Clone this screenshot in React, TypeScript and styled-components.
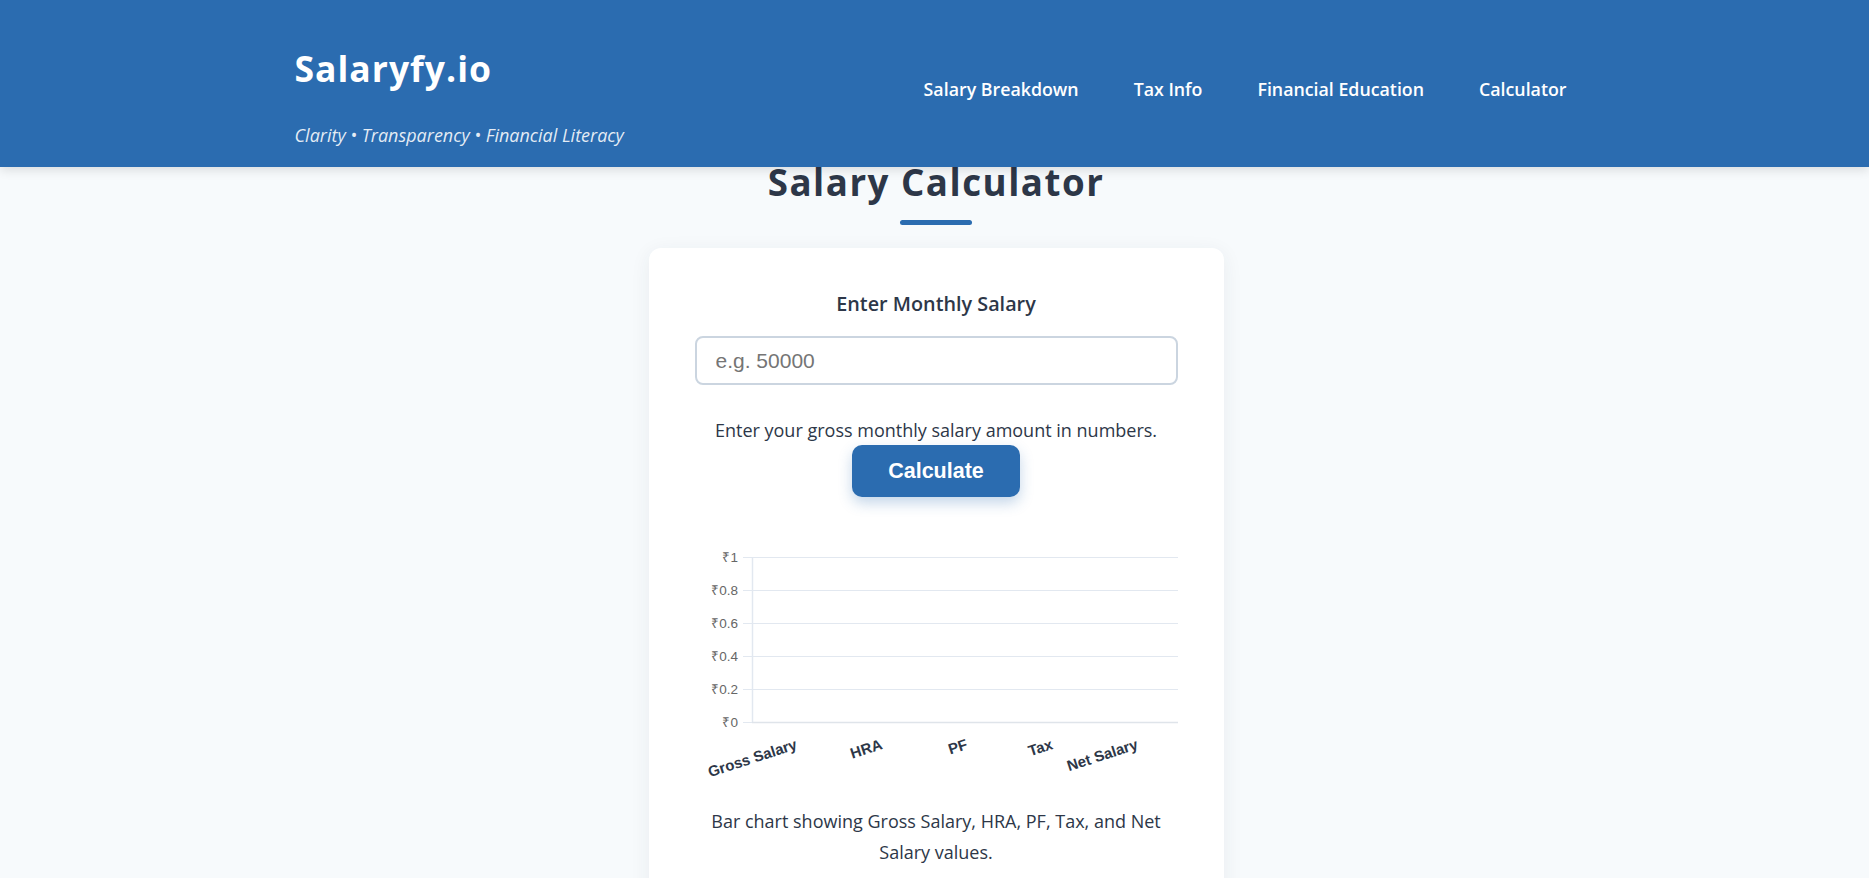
import React from "react";
import styled, { createGlobalStyle } from "styled-components";

const GlobalStyle = createGlobalStyle`
  * { box-sizing: border-box; }
  html, body { margin: 0; padding: 0; }
  body {
    background: #f7fafc;
    font-family: "Open Sans", "Noto Sans", sans-serif;
    color: #2d3748;
    overflow: hidden;
  }
`;

const Header = styled.header`
  position: sticky;
  top: 0;
  z-index: 10;
  height: 167px;
  background: #2b6cb0;
  box-shadow: 0 3px 10px rgba(0, 0, 0, 0.12);
`;

const HeaderInner = styled.div`
  max-width: 1280px;
  margin: 0 auto;
  padding-top: 47px;
  display: flex;
  justify-content: space-between;
  align-items: flex-start;
`;

const Brand = styled.div`
  display: flex;
  flex-direction: column;
  gap: 33px;
`;

const Logo = styled.h1`
  margin: 0;
  font-size: 35.5px;
  line-height: 43px;
  font-weight: 700;
  letter-spacing: 1px;
  color: #ffffff;
`;

const Tagline = styled.p`
  margin: 0;
  font-size: 18px;
  line-height: 24px;
  font-style: italic;
  color: rgba(255, 255, 255, 0.88);
`;

const Nav = styled.nav`
  display: flex;
  gap: 39px;
  margin-top: 22px;
`;

const NavLink = styled.a`
  padding: 8px;
  font-size: 17.8px;
  line-height: 24px;
  font-weight: 600;
  color: #ffffff;
  text-decoration: none;
  cursor: pointer;
`;

const Main = styled.main`
  margin-top: -7px;
  padding-left: 3px;
  display: flex;
  flex-direction: column;
  align-items: center;
`;

const PageTitle = styled.h2`
  margin: 0;
  font-size: 36.7px;
  line-height: 44px;
  font-weight: 700;
  letter-spacing: 1.5px;
  color: #2d3748;
`;

const TitleBar = styled.div`
  width: 72px;
  height: 5px;
  border-radius: 3px;
  background: #2b6cb0;
  margin-top: 16px;
`;

const Card = styled.section`
  width: 575px;
  margin-top: 23px;
  background: #ffffff;
  border-radius: 12px;
  box-shadow: 0 4px 20px rgba(45, 55, 72, 0.07);
  padding: 42px 46px 60px;
  display: flex;
  flex-direction: column;
  align-items: center;
`;

const Label = styled.label`
  font-size: 19.8px;
  line-height: 28px;
  font-weight: 600;
  color: #2d3748;
`;

const Input = styled.input`
  width: 100%;
  height: 49px;
  margin-top: 18px;
  padding: 0 19px;
  border: 2px solid #cbd5e0;
  border-radius: 8px;
  font-family: "Liberation Sans", Arial, sans-serif;
  font-size: 21px;
  color: #2d3748;
  background: #ffffff;
  outline: none;
  &::placeholder { color: #757575; }
`;

const Help = styled.p`
  margin: 33px 0 0;
  font-size: 18px;
  line-height: 24px;
  color: #2d3748;
  text-align: center;
`;

const Button = styled.button`
  margin-top: 3px;
  width: 168px;
  height: 52px;
  border: none;
  border-radius: 10px;
  background: #2b6cb0;
  color: #ffffff;
  font-family: "Liberation Sans", Arial, sans-serif;
  font-size: 21.5px;
  font-weight: 700;
  box-shadow: 0 6px 14px rgba(43, 108, 176, 0.28);
  cursor: pointer;
`;

const ChartWrap = styled.div`
  width: 100%;
  margin-top: 48px;
`;

const Caption = styled.p`
  margin: 21px 0 0;
  font-size: 18px;
  line-height: 31px;
  color: #2d3748;
  text-align: center;
`;

const yTicks = [
  { y: 12, label: "₹1" },
  { y: 45, label: "₹0.8" },
  { y: 78, label: "₹0.6" },
  { y: 111, label: "₹0.4" },
  { y: 144, label: "₹0.2" },
  { y: 177, label: "₹0" },
];

const categories = ["Gross Salary", "HRA", "PF", "Tax", "Net Salary"];

function Chart() {
  const left = 57;
  const right = 483;
  const step = (right - left) / categories.length;
  return (
    <svg width="483" height="240" viewBox="0 0 483 240" style={{ display: "block" }}>
      {yTicks.map((t) => (
        <g key={t.label}>
          <line x1={48} x2={right} y1={t.y + 0.5} y2={t.y + 0.5} stroke="#e2e8f0" strokeWidth={1} />
          <text
            x={43}
            y={t.y + 5}
            textAnchor="end"
            fontFamily="Liberation Sans, Arial, sans-serif"
            fontSize={13.5}
            fill="#666666"
          >
            {t.label}
          </text>
        </g>
      ))}
      <line x1={left + 0.5} x2={left + 0.5} y1={12} y2={177} stroke="#e2e8f0" strokeWidth={1.5} />
      <line x1={left} x2={right} y1={177.5} y2={177.5} stroke="#dfe4ea" strokeWidth={1.5} />
      {categories.map((c, i) => {
        const cx = left + step * (i + 0.5);
        const y = 193;
        return (
          <text
            key={c}
            x={cx}
            y={y}
            textAnchor="end"
            dominantBaseline="hanging"
            transform={`rotate(-18 ${cx} ${y})`}
            fontFamily="Liberation Sans, Arial, sans-serif"
            fontSize={15}
            fontWeight={700}
            fill="#2d3748"
          >
            {c}
          </text>
        );
      })}
    </svg>
  );
}

export default function App() {
  return (
    <>
      <GlobalStyle />
      <Header>
        <HeaderInner>
          <Brand>
            <Logo>Salaryfy.io</Logo>
            <Tagline>Clarity • Transparency • Financial Literacy</Tagline>
          </Brand>
          <Nav>
            <NavLink>Salary Breakdown</NavLink>
            <NavLink>Tax Info</NavLink>
            <NavLink>Financial Education</NavLink>
            <NavLink>Calculator</NavLink>
          </Nav>
        </HeaderInner>
      </Header>
      <Main>
        <PageTitle>Salary Calculator</PageTitle>
        <TitleBar />
        <Card>
          <Label htmlFor="salary">Enter Monthly Salary</Label>
          <Input id="salary" type="text" placeholder="e.g. 50000" />
          <Help>Enter your gross monthly salary amount in numbers.</Help>
          <Button>Calculate</Button>
          <ChartWrap>
            <Chart />
          </ChartWrap>
          <Caption>Bar chart showing Gross Salary, HRA, PF, Tax, and Net Salary values.</Caption>
        </Card>
      </Main>
    </>
  );
}
